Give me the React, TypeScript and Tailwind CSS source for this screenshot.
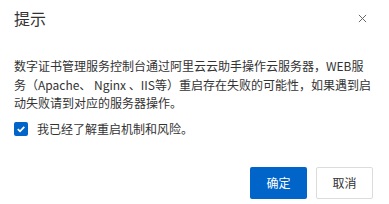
import React from "react";

export default function App() {
  return (
    <div
      className="w-[389px] h-[204px] bg-white flex flex-col text-[#333333]"
      style={{ fontFamily: '"Noto Sans CJK SC", "Liberation Sans", sans-serif' }}
    >
      <div className="flex items-center justify-between pl-[14px] pr-[22px] pt-[3px] h-[33px]">
        <span className="text-[16px] leading-[22px] text-[#333333]">提示</span>
        <svg width="9" height="9" viewBox="0 0 10 10" className="text-[#666666]">
          <path d="M1 1L9 9M9 1L1 9" stroke="currentColor" strokeWidth="1.1" />
        </svg>
      </div>
      <div className="px-[14px] pt-[24px]">
        <p className="text-[12px] leading-[18.5px] text-[#333333] w-[361px]">
          数字证书管理服务控制台通过阿里云云助手操作云服务器，WEB服务（Apache、 Nginx 、IIS等）重启存在失败的可能性，如果遇到启动失败请到对应的服务器操作。
        </p>
        <label className="flex items-center gap-[9px] mt-[8px] h-[16px]">
          <span className="w-[14px] h-[14px] rounded-[2px] bg-[#0064c8] flex items-center justify-center">
            <svg width="10" height="10" viewBox="0 0 10 10">
              <path d="M1.8 5.2L4 7.3L8.3 2.8" stroke="white" strokeWidth="1.8" fill="none" />
            </svg>
          </span>
          <span className="text-[12px] leading-[16px] text-[#333333]">我已经了解重启机制和风险。</span>
        </label>
      </div>
      <div className="flex justify-end gap-[9px] pr-[16px] mt-[30px]">
        <button className="w-[57px] h-[32px] rounded-[2px] bg-[#0064c8] text-white text-[12px]">确定</button>
        <button className="w-[57px] h-[32px] rounded-[2px] bg-white border border-[#dcdcdc] text-[#333333] text-[12px]">取消</button>
      </div>
    </div>
  );
}
